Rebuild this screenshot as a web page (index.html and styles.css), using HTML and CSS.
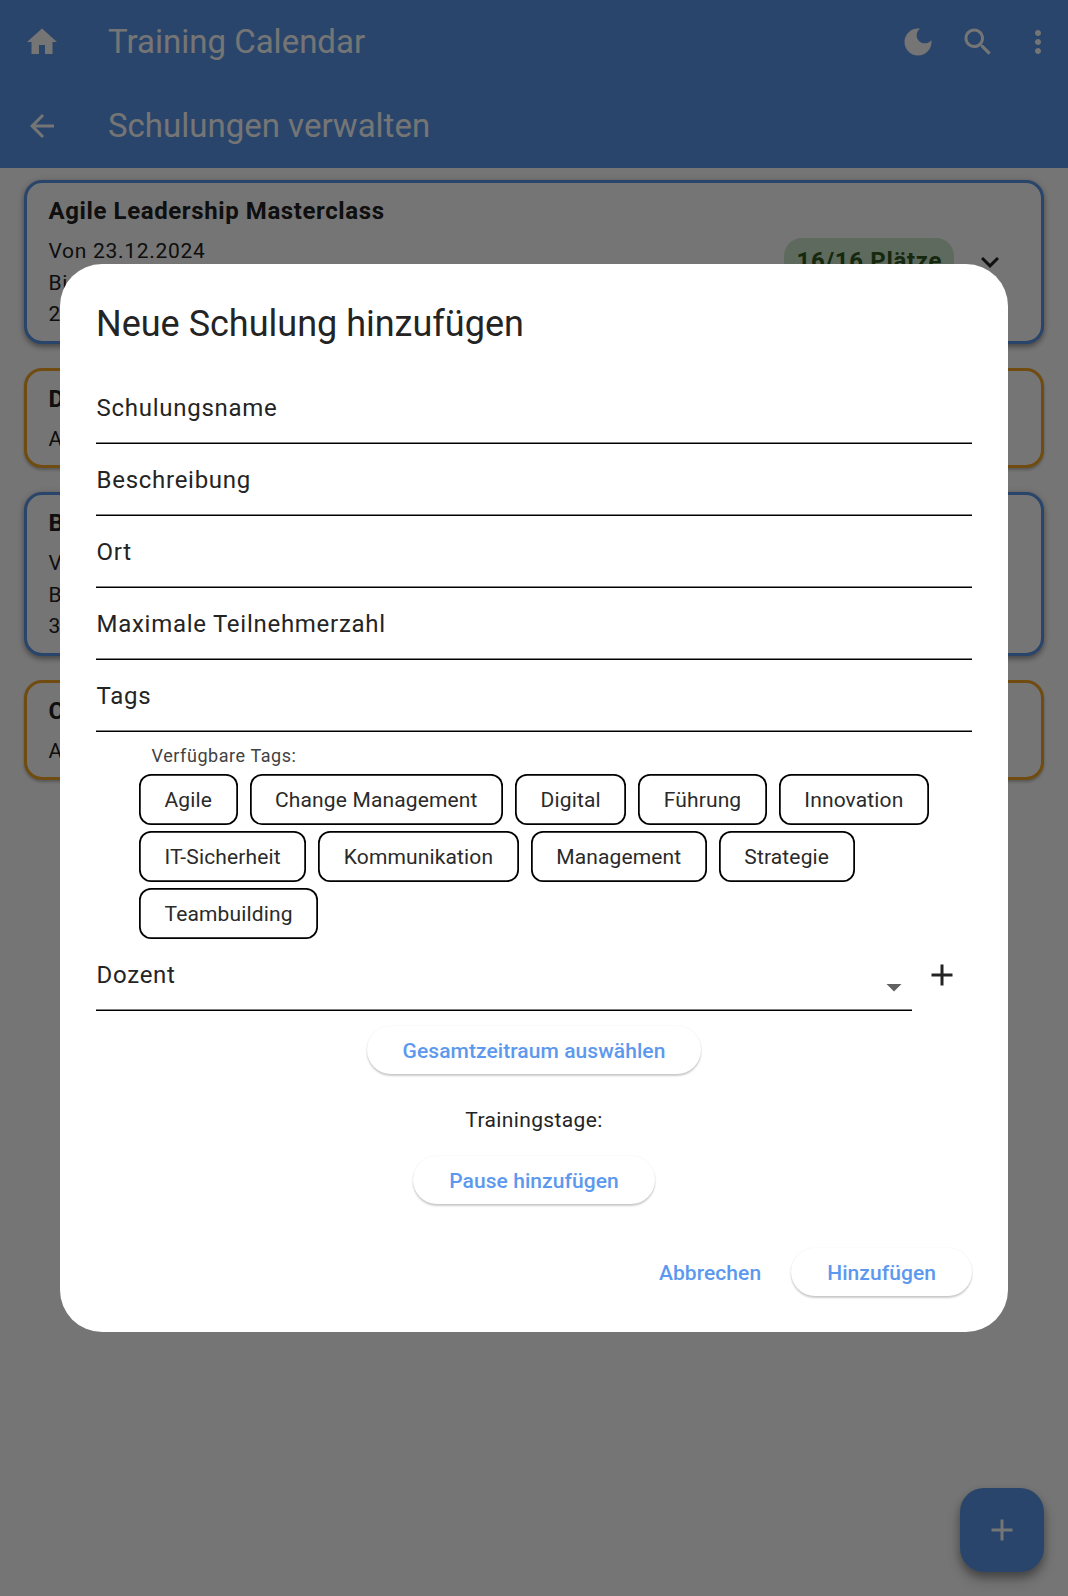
FILE: index.html
```html
<!DOCTYPE html>
<html lang="de">
<head>
<meta charset="utf-8">
<title>Training Calendar</title>
<link rel="stylesheet" href="styles.css">
</head>
<body>
<div class="app">
  <header class="appbar">
    <div class="bar">
      <svg class="icon" viewBox="0 0 24 24"><path d="M10 20v-6h4v6h5v-8h3L12 3 2 12h3v8z"/></svg>
      <h1 class="bar-title">Training Calendar</h1>
      <div class="bar-actions">
        <svg class="icon" viewBox="0 0 24 24"><path d="M12 3c-4.97 0-9 4.03-9 9s4.03 9 9 9 9-4.03 9-9c0-.46-.04-.92-.1-1.36-.98 1.37-2.58 2.26-4.4 2.26-2.98 0-5.4-2.42-5.4-5.4 0-1.81.89-3.42 2.26-4.4-.44-.06-.9-.1-1.36-.1z"/></svg>
        <svg class="icon" viewBox="0 0 24 24"><path d="M15.5 14h-.79l-.28-.27C15.41 12.59 16 11.11 16 9.5 16 5.91 13.09 3 9.5 3S3 5.91 3 9.5 5.91 16 9.5 16c1.61 0 3.09-.59 4.23-1.57l.27.28v.79l5 4.99L20.49 19l-4.99-5zm-6 0C7.01 14 5 11.99 5 9.5S7.01 5 9.5 5 14 7.01 14 9.5 11.99 14 9.5 14z"/></svg>
        <svg class="icon" viewBox="0 0 24 24"><path d="M12 8c1.1 0 2-.9 2-2s-.9-2-2-2-2 .9-2 2 .9 2 2 2zm0 2c-1.1 0-2 .9-2 2s.9 2 2 2 2-.9 2-2-.9-2-2-2zm0 6c-1.1 0-2 .9-2 2s.9 2 2 2 2-.9 2-2-.9-2-2-2z"/></svg>
      </div>
    </div>
    <div class="bar">
      <svg class="icon" viewBox="0 0 24 24"><path d="M20 11H7.83l5.59-5.59L12 4l-8 8 8 8 1.41-1.41L7.83 13H20v-2z"/></svg>
      <h2 class="bar-title">Schulungen verwalten</h2>
    </div>
  </header>

  <main class="list">
    <article class="card card-blue">
      <div class="card-text">
        <h3 class="card-title">Agile Leadership Masterclass</h3>
        <p class="card-sub">Von 23.12.2024<br>Bis<br>2</p>
      </div>
      <span class="badge">16/16 Plätze</span>
      <svg class="icon expand" viewBox="0 0 24 24"><path d="M16.59 8.59L12 13.17 7.41 8.59 6 10l6 6 6-6z"/></svg>
    </article>
    <article class="card card-orange">
      <div class="card-text">
        <h3 class="card-title">D</h3>
        <p class="card-sub">A</p>
      </div>
    </article>
    <article class="card card-blue">
      <div class="card-text">
        <h3 class="card-title">B</h3>
        <p class="card-sub">V<br>B<br>3</p>
      </div>
    </article>
    <article class="card card-orange">
      <div class="card-text">
        <h3 class="card-title">C</h3>
        <p class="card-sub">A</p>
      </div>
    </article>
  </main>

  <button class="fab" aria-label="Neue Schulung">
    <svg class="icon" viewBox="0 0 24 24"><path d="M19 13h-6v6h-2v-6H5v-2h6V5h2v6h6v2z"/></svg>
  </button>
</div>

<div class="scrim">
  <section class="dialog">
    <h2 class="dialog-title">Neue Schulung hinzufügen</h2>
    <div class="field">Schulungsname</div>
    <div class="field">Beschreibung</div>
    <div class="field">Ort</div>
    <div class="field">Maximale Teilnehmerzahl</div>
    <div class="field">Tags</div>
    <div class="tags">
      <p class="tags-label">Verfügbare Tags:</p>
      <div class="chips">
        <span class="chip">Agile</span>
        <span class="chip">Change Management</span>
        <span class="chip">Digital</span>
        <span class="chip">Führung</span>
        <span class="chip">Innovation</span>
        <span class="chip">IT-Sicherheit</span>
        <span class="chip">Kommunikation</span>
        <span class="chip">Management</span>
        <span class="chip">Strategie</span>
        <span class="chip">Teambuilding</span>
      </div>
    </div>
    <div class="lecturer">
      <div class="field select">Dozent
        <svg class="icon arrow" viewBox="0 0 24 24"><path d="M7 10l5 5 5-5z"/></svg>
      </div>
      <svg class="icon add" viewBox="0 0 24 24"><path d="M19 13h-6v6h-2v-6H5v-2h6V5h2v6h6v2z"/></svg>
    </div>
    <div class="schedule">
      <button class="btn raised">Gesamtzeitraum auswählen</button>
      <p class="days">Trainingstage:</p>
      <button class="btn raised">Pause hinzufügen</button>
    </div>
    <div class="actions">
      <button class="btn">Abbrechen</button>
      <button class="btn raised">Hinzufügen</button>
    </div>
  </section>
</div>
</body>
</html>
```
FILE: styles.css
```css
* {
  box-sizing: border-box;
  margin: 0;
}

body {
  background: #fff;
  color: #242424;
  font-family: Roboto, sans-serif;
  height: 1596px;
  overflow: hidden;
}

button {
  border: 0;
  background: none;
  font-family: inherit;
}

.icon {
  display: block;
  flex: none;
  width: 36px;
  height: 36px;
  fill: currentColor;
}

.app {
  height: 1596px;
}

.appbar {
  background: #5996e9;
  color: #fff;
}

.bar {
  display: flex;
  align-items: center;
  height: 84px;
  padding: 0 12px 0 24px;
}

.bar-title {
  flex: 1;
  margin-left: 48px;
  font-size: 33px;
  font-weight: 400;
  line-height: 42px;
}

.bar-actions {
  display: flex;
  gap: 24px;
}

.list {
  display: flex;
  flex-direction: column;
  gap: 24px;
  padding: 12px 24px;
}

.card {
  display: flex;
  align-items: center;
  height: 100.5px;
  padding: 0 33px 0 21.5px;
  border: 3px solid;
  border-radius: 18px;
  background: #fff;
  box-shadow: 0 3px 5px rgba(0, 0, 0, .3), 0 1px 8px rgba(0, 0, 0, .16);
}

.card-blue {
  border-color: #5996e9;
  height: 163.5px;
}

.card-orange {
  border-color: #f5a623;
  box-shadow: 0 2px 3px rgba(0, 0, 0, .25);
}

.card-text {
  flex: 1;
  color: #212121;
}

.card-title {
  margin-bottom: 7px;
  font-size: 24px;
  font-weight: 700;
  line-height: 36px;
  letter-spacing: .6px;
}

.card-sub {
  font-size: 21px;
  line-height: 31.5px;
  letter-spacing: .7px;
}

.badge {
  margin: 1px 18px 0 0;
  padding: 5px 12px 7px;
  border-radius: 18px;
  background: #cee8ce;
  color: #30591f;
  font-size: 24px;
  font-weight: 700;
  line-height: 36px;
  letter-spacing: .65px;
}

.expand {
  margin-top: 1px;
}

.fab {
  position: fixed;
  right: 24px;
  bottom: 24px;
  display: flex;
  align-items: center;
  justify-content: center;
  width: 84px;
  height: 84px;
  border-radius: 24px;
  background: #5996e9;
  color: #fff;
  box-shadow: 0 5px 8px rgba(0, 0, 0, .3), 0 8px 16px rgba(0, 0, 0, .2);
}

.scrim {
  position: fixed;
  inset: 0;
  display: flex;
  align-items: center;
  justify-content: center;
  background: rgba(0, 0, 0, .54);
}

.dialog {
  width: 948px;
  height: 1068px;
  padding: 36px;
  border-radius: 42px;
  background: #fff;
}

.dialog-title {
  margin-bottom: 24px;
  font-size: 36px;
  font-weight: 400;
  line-height: 48px;
}

.field {
  display: flex;
  align-items: center;
  height: 72px;
  padding-left: .5px;
  background: linear-gradient(#808080 50%, #000 50%) bottom / 100% 2px no-repeat;
  font-size: 24px;
  letter-spacing: .73px;
}

.tags {
  padding: 12px 0 0 43px;
}

.tags-label {
  margin: 0 0 6px 12.5px;
  font-size: 18px;
  line-height: 24px;
  letter-spacing: .57px;
  color: #424242;
}

.chips {
  display: flex;
  flex-wrap: wrap;
  gap: 6px 12px;
}

.chip {
  height: 51px;
  padding: 0 25.5px;
  border-radius: 12px;
  box-shadow: inset 0 0 0 1.75px #000;
  color: #2a2a2a;
  font-size: 21px;
  line-height: 53px;
  letter-spacing: .14px;
}

.lecturer {
  display: flex;
  align-items: center;
}

.select {
  flex: 1;
  justify-content: space-between;
}

.arrow {
  margin-top: 24px;
  color: #616161;
}

.add {
  margin: 0 12px;
}

.schedule {
  display: flex;
  flex-direction: column;
  align-items: center;
  padding-top: 15px;
}

.days {
  margin: 31px 0 21px;
  font-size: 21px;
  line-height: 30px;
  letter-spacing: .375px;
}

.btn {
  height: 48px;
  padding: 2px 18px 0;
  border-radius: 24px;
  color: #5c99ee;
  font-size: 21px;
  font-weight: 500;
  line-height: 46px;
  letter-spacing: .07px;
}

.raised {
  padding: 2px 36px 0;
  background: #fff;
  box-shadow: 0 2px 2px rgba(0, 0, 0, .2), 0 0 2px rgba(0, 0, 0, .07);
}

.actions {
  display: flex;
  justify-content: flex-end;
  gap: 12px;
  margin-top: 44px;
}
```
